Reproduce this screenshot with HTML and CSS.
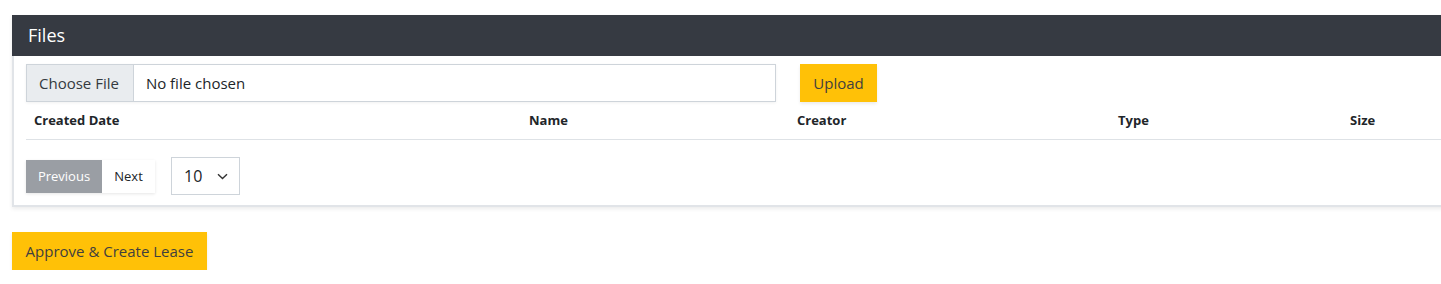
FILE: index.html
```html
<!DOCTYPE html>
<html>
<head>
<meta charset="utf-8">
<link rel="stylesheet" href="styles.css">
</head>
<body>
<div class="page">
  <section class="card">
    <header class="card-header">Files</header>
    <div class="card-body">
      <div class="upload-row">
        <div class="file-input">
          <span class="file-btn">Choose File</span>
          <span class="file-name">No file chosen</span>
        </div>
        <button class="btn-warning upload-btn">Upload</button>
      </div>
      <div class="table-head">
        <div class="th">Created Date</div>
        <div class="th">Name</div>
        <div class="th">Creator</div>
        <div class="th">Type</div>
        <div class="th">Size</div>
      </div>
      <div class="pager-row">
        <div class="pager">
          <span class="pg prev">Previous</span>
          <span class="pg next">Next</span>
        </div>
        <div class="select">
          <span>10</span>
          <svg class="chev" width="11" height="7" viewBox="0 0 11 7"><path d="M1 1.2 L5.5 5.6 L10 1.2" fill="none" stroke="#333" stroke-width="1.4"/></svg>
        </div>
      </div>
    </div>
  </section>
  <button class="btn-warning approve-btn">Approve &amp; Create Lease</button>
</div>
</body>
</html>
```
FILE: styles.css
```css
html, body {
  margin: 0;
  padding: 0;
  background: #fff;
  overflow: hidden;
  font-family: "Open Sans", "Noto Sans", sans-serif;
  color: #212529;
}
.page {
  padding: 15px 0 0 12px;
  width: 1460px;
}
.card {
  width: 1450px;
  box-shadow: 0 2px 4px rgba(0,0,0,0.08);
}
.card-header {
  background: #363a42;
  color: #fff;
  height: 41px;
  box-sizing: border-box;
  padding: 0 16px;
  font-size: 18px;
  line-height: 41px;
}
.card-body {
  border-left: 2px solid #e1e4e8;
  border-bottom: 2px solid #e1e4e8;
  padding: 8px 12px 10px 12px;
}
.upload-row {
  display: flex;
  align-items: flex-start;
  gap: 24px;
}
.file-input {
  width: 750px;
  height: 38px;
  box-sizing: border-box;
  border: 1px solid #ced4da;
  display: flex;
  align-items: stretch;
  font-size: 15px;
  box-shadow: 0 1px 3px rgba(0,0,0,0.06);
}
.file-btn {
  background: #e9ecef;
  border-right: 1px solid #ced4da;
  padding: 0 14px 0 12px;
  display: flex;
  align-items: center;
  color: #343a40;
}
.file-name {
  padding: 0 12px;
  display: flex;
  align-items: center;
  color: #212529;
}
.btn-warning {
  background: #ffc107;
  color: #3f3f3f;
  border: none;
  font-family: inherit;
  font-size: 15px;
  padding: 0 13px;
  height: 38px;
  box-shadow: 0 2px 3px rgba(0,0,0,0.08);
  cursor: pointer;
}
.upload-btn {
  width: 77px;
  padding: 0;
}
.table-head {
  display: grid;
  grid-template-columns: 495px 268px 321px 232px 1fr;
  border-bottom: 1px solid #dee2e6;
  height: 38px;
  padding-bottom: 2px;
  box-sizing: border-box;
  align-items: center;
}
.th {
  font-size: 13px;
  font-weight: 700;
  padding: 0 8px;
  color: #212529;
}
.pager-row {
  display: flex;
  align-items: center;
  gap: 16px;
  margin-top: 17px;
}
.pager {
  display: flex;
  box-shadow: 0 1px 3px rgba(0,0,0,0.1);
}
.pg {
  height: 33px;
  display: flex;
  align-items: center;
  font-size: 13px;
}
.prev {
  background: #9a9ea4;
  color: #fff;
  width: 76px;
  justify-content: center;
}
.next {
  background: #fff;
  color: #212529;
  width: 53px;
  justify-content: center;
}
.select {
  width: 69px;
  height: 38px;
  box-sizing: border-box;
  border: 1px solid #ced4da;
  display: flex;
  align-items: center;
  padding: 0 12px;
  font-size: 16px;
  gap: 15px;
}
.chev {
  flex: none;
}
.approve-btn {
  margin-top: 25px;
  width: 195px;
  padding: 0;
}
```
